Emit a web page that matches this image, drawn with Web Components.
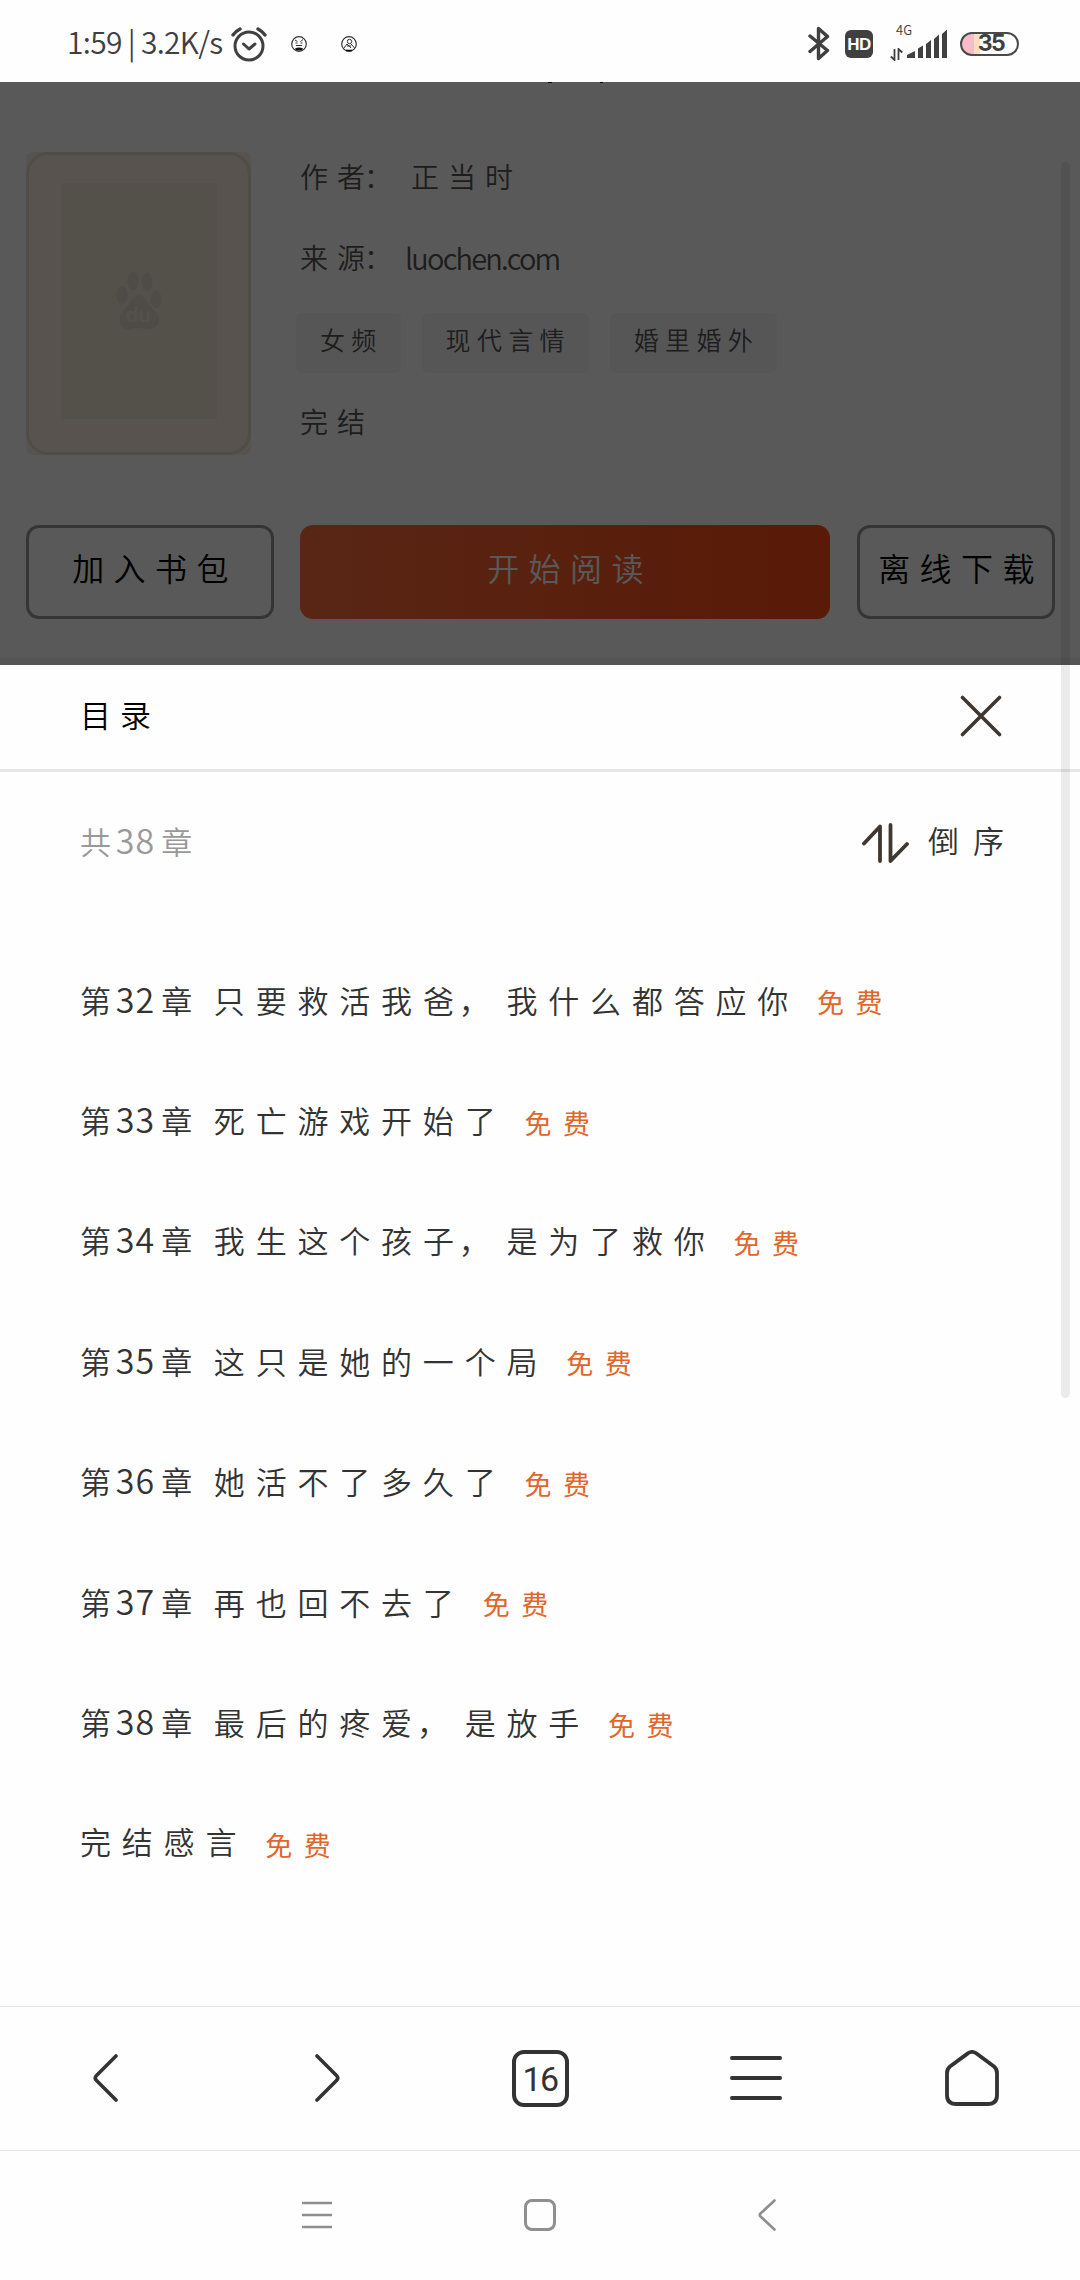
<!DOCTYPE html>
<html lang="zh-CN">
<head>
<meta charset="utf-8">
<meta name="viewport" content="width=1080">
<title>目录</title>
<style>
    body{
        margin: 0;
        background: #fefefe;
        font-family: 'Noto Sans CJK SC', 'Noto Sans', sans-serif;
        font-weight: 350;
        color: #333;
    }
</style>
</head>
<body>
<reader-app></reader-app>

<script>
const ICONS = {
    alarm: [36, 36, '<g fill="none" stroke="#404040" stroke-linecap="round"><circle cx="18" cy="20" r="14" stroke-width="3"/><path d="M12.5 18l5.5 5 6-5" stroke-width="3" stroke-linejoin="round"/><path d="M2 9Q5 5 9 3M34 9Q31 5 27 3" stroke-width="3.4"/></g>'],
    face: [16, 16, '<g fill="none" stroke="#333"><circle cx="8" cy="8" r="7.3" stroke-width="1.2"/><path d="M4 4l2.500 1.500M12 3.500l-2.500 2M4.500 7h2M9.500 7h2M5 9.500h6" stroke-width="1"/></g><path d="M4 12.500Q8 10.500 12 12.500L11 14.500H5z" fill="#111"/>'],
    person: [16, 16, '<g fill="none" stroke="#333"><circle cx="8" cy="8" r="7.3" stroke-width="1.2"/><circle cx="8.500" cy="5.500" r="2.200"/><path d="M3 12l3-4 4 4M10 8l3.500 4M6 10h4"/></g><path d="M5 14.500h6" stroke="#111" stroke-width="1.600"/>'],
    bluetooth: [22, 35, '<path d="M2 10L19.500 24.500 10.500 32.500V2.500L19.500 10.500 2 25.500" fill="none" stroke="#404040" stroke-width="3.400" stroke-linecap="round" stroke-linejoin="round"/>'],
    arrows: [13, 13, '<path d="M4.500 1v11L.8 8.500M8.500 12V1l3.700 3.500" fill="none" stroke="#404040" stroke-width="1.800"/>'],
    signal: [41, 30, '<g fill="#404040"><path d="M0 29v-3l8-4v7zM11 29V19.500l5-3V29zM19 29V15l5-4v18zM27 29V10l5-4.500V29zM35 29V5l5-4.500V29z"/></g>'],
    close: [42, 42, '<path d="M2.500 2.500l37 37M39.500 2.500l-37 37" stroke="#403730" stroke-width="3.600" stroke-linecap="round"/>'],
    sort: [48, 40, '<path d="M3 20.500L19 3.500V38M29.500 2v36L46 21" fill="none" stroke="#403730" stroke-width="3.800" stroke-linecap="round" stroke-linejoin="round"/>'],
    back: [26, 48, '<path d="M24 2L4.500 21.500q-2.500 2.500 0 5L24 46" fill="none" stroke="#333" stroke-width="3.600" stroke-linecap="round"/>'],
    forward: [26, 48, '<path d="M2 2l19.500 19.500q2.500 2.500 0 5L2 46" fill="none" stroke="#333" stroke-width="3.600" stroke-linecap="round"/>'],
    menu: [52, 44, '<path d="M2 2h48M2 22h48M2 42h48" stroke="#333" stroke-width="4" stroke-linecap="round"/>'],
    home: [54, 56, '<path d="M22.500 3.600q4.500-3.400 9 0L49 16.500q3 2.500 3 6.500V45q0 9-9 9H11q-9 0-9-9V23q0-4 3-6.500z" fill="none" stroke="#333" stroke-width="3.800"/>'],
    sysmenu: [30, 28, '<path d="M0 2h30M0 14h30M0 26h30" stroke="#8f8f8f" stroke-width="2.600"/>'],
    sysback: [18, 32, '<path d="M16.500 1.500L2.500 14.500q-1.500 1.500 0 3L16.500 30.500" fill="none" stroke="#8f8f8f" stroke-width="2.600" stroke-linecap="round"/>'],
    paw: [46, 60, '<g fill="#e3d9cb"><ellipse cx="6" cy="24" rx="5.700" ry="9"/><ellipse cx="17" cy="10" rx="5.500" ry="9.300"/><ellipse cx="31" cy="11" rx="5.500" ry="9"/><ellipse cx="40" cy="28" rx="5.500" ry="9"/><path d="M16 28q7-8 13 0 4 7 9 11 7 6 4 14-4 7-13 5-7-2-13 0-10 2-12-6-2-7 4-13 5-5 8-11z"/></g>']
};

class UiIcon extends HTMLElement{

    constructor() {
        super();
        this.shadowDOM = this.attachShadow({mode: "open"});
    }

    connectedCallback(){
        const [w, h, body] = ICONS[this.getAttribute('name')];
        this.shadowDOM.innerHTML = `
        <style>
            :host{
                display: block;
                flex: none;
                width: ${w}px;
                height: ${h}px;
            }
            svg{
                display: block;
            }
        </style>
        <svg width="${w}" height="${h}" viewBox="0 0 ${w} ${h}">${body}</svg>
        `;
    }
}

class StatusBar extends HTMLElement{

    constructor() {
        super();
        this.shadowDOM = this.attachShadow({mode: "open"});
    }

    connectedCallback(){
        this.shadowDOM.innerHTML = `
        <style>
            :host{
                display: flex;
                align-items: center;
                justify-content: space-between;
                height: 82px;
                padding: 5px 61px 0 67px;
                box-sizing: border-box;
                background: #fefefe;
                color: #404040;
            }
            .side{
                display: flex;
                align-items: center;
            }
            .time{
                width: 164px;
                padding-bottom: 5px;
                font-size: 30px;
                line-height: 40px;
                letter-spacing: -0.7px;
                white-space: pre;
            }
            .apps{
                display: flex;
                gap: 34px;
                margin-left: 24px;
            }
            .hd{
                width: 28px;
                height: 28px;
                margin: 0 17px 0 15px;
                border-radius: 6px;
                background: #404040;
                color: #fff;
                font: bold 17px/29px 'Liberation Sans', sans-serif;
                letter-spacing: -0.5px;
                text-align: center;
            }
            .net{
                display: flex;
                flex-direction: column;
                width: 17px;
                height: 35px;
                justify-content: space-between;
                font-size: 13px;
                line-height: 8px;
            }
            .net span{
                padding-left: 6px;
            }
            .battery{
                display: flex;
                justify-content: center;
                width: 59px;
                height: 24px;
                margin-left: 12px;
                border: 2.5px solid #4a4a4a;
                border-radius: 12px;
                box-sizing: border-box;
                background: linear-gradient(90deg, #f7bcc8 12px, #ffdcc0 12px, #ffdcc0 18px, #fff 18px);
                font: bold 23px/19px Inter, sans-serif;
                letter-spacing: -1.5px;
            }
            .battery span{
                padding-left: 3px;
            }
        </style>
        <div class="side">
            <div class="time">1:59 | 3.2K/s</div>
            <ui-icon name="alarm"></ui-icon>
            <div class="apps"><ui-icon name="face"></ui-icon><ui-icon name="person"></ui-icon></div>
        </div>
        <div class="side">
            <ui-icon name="bluetooth"></ui-icon>
            <div class="hd">HD</div>
            <div class="net"><span>4G</span><ui-icon name="arrows"></ui-icon></div>
            <ui-icon name="signal"></ui-icon>
            <div class="battery"><span>35</span></div>
        </div>
        `;
    }
}

class BookTag extends HTMLElement{

    constructor() {
        super();
        this.shadowDOM = this.attachShadow({mode: "open"});
    }

    connectedCallback(){
        this.shadowDOM.innerHTML = `
        <style>
            :host{
                display: block;
                height: 60px;
                padding: 0 18px 0 24px;
                border-radius: 6px;
                background: #f5f5f5;
                font-size: 25px;
                line-height: 53px;
                letter-spacing: 6.3px;
                box-sizing: border-box;
            }
        </style>
        <slot></slot>
        `;
    }
}

class ActionButton extends HTMLElement{

    constructor() {
        super();
        this.shadowDOM = this.attachShadow({mode: "open"});
    }

    connectedCallback(){
        this.shadowDOM.innerHTML = `
        <style>
            :host{
                display: flex;
                justify-content: center;
                height: 94px;
                border: 3px solid #999;
                border-radius: 13px;
                box-sizing: border-box;
                padding-left: 10px;
                color: #000;
                font-size: 32px;
                line-height: 79px;
                letter-spacing: 9.4px;
                white-space: nowrap;
            }
            :host([primary]){
                border: none;
                background: linear-gradient(90deg, #ff6e3c, #ff4b14);
                color: #fff;
                line-height: 85px;
            }
        </style>
        <slot></slot>
        `;
    }
}

class BookDetail extends HTMLElement{

    constructor() {
        super();
        this.shadowDOM = this.attachShadow({mode: "open"});
    }

    connectedCallback(){
        this.shadowDOM.innerHTML = `
        <style>
            :host{
                display: block;
                position: relative;
                height: 583px;
                padding-top: 70px;
                border-bottom: 7px solid #efefef;
                box-sizing: border-box;
                background: #fff;
                color: #555;
            }
            .book{
                display: flex;
                height: 303px;
                padding: 0 26px;
            }
            .cover{
                width: 225px;
                height: 303px;
                border-radius: 7px;
                background: #fbede2;
            }
            .frame{
                display: flex;
                align-items: center;
                justify-content: center;
                height: 100%;
                padding-bottom: 5px;
                border: 3px solid #dfddce;
                border-radius: 22px;
                box-sizing: border-box;
            }
            .art{
                display: flex;
                align-items: center;
                justify-content: center;
                width: 156px;
                height: 236px;
                background: #eee7d2;
            }
            .logo{
                position: relative;
            }
            .logo span{
                position: absolute;
                left: 10px;
                top: 32px;
                color: #eee7d2;
                font: bold 21px/24px 'Liberation Sans', sans-serif;
            }
            .info{
                display: grid;
                grid-template-rows: 48px 113px 59px 83px;
                align-items: center;
                margin-left: 49px;
                font-size: 28px;
                letter-spacing: 9px;
            }
            .line{
                display: flex;
                align-items: center;
            }
            .tight{
                letter-spacing: -1px;
            }
            .colon{
                margin-right: 10px;
            }
            .url{
                font-size: 29px;
                letter-spacing: -1.8px;
                margin-left: -6px;
            }
            .tags{
                display: flex;
                gap: 21px;
                margin-left: -4px;
            }
            .done{
                align-self: end;
                line-height: 40px;
                padding-bottom: 14px;
            }
            .actions{
                display: grid;
                grid-template-columns: 248px 530px 199px;
                column-gap: 26px;
                margin: 70px 25px 0 26px;
            }
            .actions :last-child{
                margin-left: 1px;
            }
            .title-edge{
                position: absolute;
                left: 548px;
                top: 0;
            }
            .dim{
                position: absolute;
                inset: 0 0 -7px;
                background: rgba(0, 0, 0, .65);
            }
        </style>
        <div class="book">
            <div class="cover"><div class="frame"><div class="art">
                <div class="logo"><ui-icon name="paw"></ui-icon><span>du</span></div>
            </div></div></div>
            <div class="info">
                <div class="line">作<span class="tight">者</span><span class="colon">：</span><span>正当时</span></div>
                <div class="line">来<span class="tight">源</span><span class="colon">：</span><span class="url">luochen.com</span></div>
                <div class="tags"><book-tag>女频</book-tag><book-tag>现代言情</book-tag><book-tag>婚里婚外</book-tag></div>
                <div class="done">完结</div>
            </div>
        </div>
        <div class="actions">
            <action-button>加入书包</action-button>
            <action-button primary>开始阅读</action-button>
            <action-button>离线下载</action-button>
        </div>
        <svg class="title-edge" width="56" height="2"><path d="M0 .5h4M52 .5h3" stroke="#000"/></svg>
        <div class="dim"></div>
        `;
    }
}

class ChapterRow extends HTMLElement{

    constructor() {
        super();
        this.shadowDOM = this.attachShadow({mode: "open"});
    }

    connectedCallback(){
        // the character before digits or a comma is set tighter
        const name = this.getAttribute('name')
            .replace(/^(.)(\d+)/, '<span class="tight">$1</span><span class="num">$2</span>')
            .replace(/(.)，/, '<span class="tight">$1</span><span class="comma">，</span>');
        this.shadowDOM.innerHTML = `
        <style>
            :host{
                display: flex;
                align-items: center;
                height: 120.4px;
                font-size: 31px;
                letter-spacing: 10.8px;
                word-spacing: -7px;
                white-space: nowrap;
            }
            .tight{
                letter-spacing: 4.8px;
            }
            .num{
                margin-right: 6px;
                font-size: 34px;
                letter-spacing: 1.100px;
            }
            .comma{
                margin-right: 6px;
            }
            .free{
                margin: 7px 0 0 18px;
                color: #e0662b;
                font-size: 27px;
                letter-spacing: 11.500px;
                font-weight: 400;
            }
        </style>
        <div>${name}</div><div class="free">免费</div>
        `;
    }
}

class CatalogSheet extends HTMLElement{

    constructor() {
        super();
        this.shadowDOM = this.attachShadow({mode: "open"});
    }

    connectedCallback(){
        const chapters = [
            '第32章 只要救活我爸，我什么都答应你',
            '第33章 死亡游戏开始了',
            '第34章 我生这个孩子，是为了救你',
            '第35章 这只是她的一个局',
            '第36章 她活不了多久了',
            '第37章 再也回不去了',
            '第38章 最后的疼爱，是放手',
            '完结感言'
        ];
        this.shadowDOM.innerHTML = `
        <style>
            :host{
                display: block;
                height: 1341px;
                background: #fefefe;
            }
            .head, .bar{
                display: flex;
                align-items: center;
                justify-content: space-between;
                padding: 0 78px 0 80px;
                font-size: 31px;
                letter-spacing: 9px;
            }
            .head{
                height: 107px;
                padding-bottom: 2px;
                border-bottom: 3px solid #e5e5e5;
                box-sizing: border-box;
                color: #000;
            }
            .head div{
                margin-top: -6px;
            }
            .bar{
                height: 135px;
                padding-bottom: 3px;
            }
            .count{
                color: #999;
                letter-spacing: 10.8px;
            }
            .tight{
                letter-spacing: 4.8px;
            }
            .num{
                margin-right: 6px;
                font-size: 34px;
                letter-spacing: 1.100px;
            }
            .order{
                display: flex;
                align-items: center;
                gap: 19px;
                letter-spacing: 14px;
                margin-right: -16px;
            }
            .order ui-icon{
                margin-top: 7px;
            }
            .list{
                padding: 28px 80px 0;
            }
        </style>
        <div class="head"><div>目录</div><ui-icon name="close"></ui-icon></div>
        <div class="bar">
            <div class="count"><span class="tight">共</span><span class="num">38</span>章</div>
            <div class="order"><ui-icon name="sort"></ui-icon><span>倒序</span></div>
        </div>
        <div class="list">${chapters.map(name => `<chapter-row name="${name}"></chapter-row>`).join('')}</div>
        `;
    }
}

class BrowserBar extends HTMLElement{

    constructor() {
        super();
        this.shadowDOM = this.attachShadow({mode: "open"});
    }

    connectedCallback(){
        this.shadowDOM.innerHTML = `
        <style>
            :host{
                display: grid;
                grid-template-columns: repeat(5, 1fr);
                place-items: center;
                height: 144px;
                padding-bottom: 1px;
                border-top: 1px solid #e5e5e5;
                box-sizing: border-box;
            }
            .back{
                margin-right: 6px;
            }
            .forward{
                margin-left: 7px;
            }
            .tabs{
                width: 57px;
                height: 57px;
                border: 4px solid #333;
                border-radius: 12px;
                box-sizing: border-box;
                font: 34px/51px Roboto, sans-serif;
                letter-spacing: -1.5px;
                text-align: center;
            }
        </style>
        <ui-icon class="back" name="back"></ui-icon>
        <ui-icon class="forward" name="forward"></ui-icon>
        <div class="tabs">16</div>
        <ui-icon name="menu"></ui-icon>
        <ui-icon name="home"></ui-icon>
        `;
    }
}

class SystemNav extends HTMLElement{

    constructor() {
        super();
        this.shadowDOM = this.attachShadow({mode: "open"});
    }

    connectedCallback(){
        this.shadowDOM.innerHTML = `
        <style>
            :host{
                display: flex;
                align-items: center;
                justify-content: space-between;
                height: 130px;
                padding: 0 304px 2px 302px;
                border-top: 1px solid #e5e5e5;
                box-sizing: border-box;
            }
            .home{
                width: 32px;
                height: 32px;
                margin-right: 10px;
                border: 3px solid #8f8f8f;
                border-radius: 8px;
                box-sizing: border-box;
            }
        </style>
        <ui-icon name="sysmenu"></ui-icon>
        <div class="home"></div>
        <ui-icon name="sysback"></ui-icon>
        `;
    }
}

class ReaderApp extends HTMLElement{

    constructor() {
        super();
        this.shadowDOM = this.attachShadow({mode: "open"});
    }

    connectedCallback(){
        this.shadowDOM.innerHTML = `
        <style>
            :host{
                display: block;
                position: relative;
                width: 1080px;
                height: 2280px;
                overflow: hidden;
            }
            .scroll{
                position: absolute;
                right: 10px;
                top: 162px;
                width: 9px;
                height: 1236px;
                border-radius: 5px;
                background: rgba(0, 0, 0, .075);
            }
        </style>
        <status-bar></status-bar>
        <book-detail></book-detail>
        <catalog-sheet></catalog-sheet>
        <browser-bar></browser-bar>
        <system-nav></system-nav>
        <div class="scroll"></div>
        `;
    }
}

customElements.define('ui-icon', UiIcon);
customElements.define('status-bar', StatusBar);
customElements.define('book-tag', BookTag);
customElements.define('action-button', ActionButton);
customElements.define('book-detail', BookDetail);
customElements.define('chapter-row', ChapterRow);
customElements.define('catalog-sheet', CatalogSheet);
customElements.define('browser-bar', BrowserBar);
customElements.define('system-nav', SystemNav);
customElements.define('reader-app', ReaderApp);
</script>
</body>
</html>
